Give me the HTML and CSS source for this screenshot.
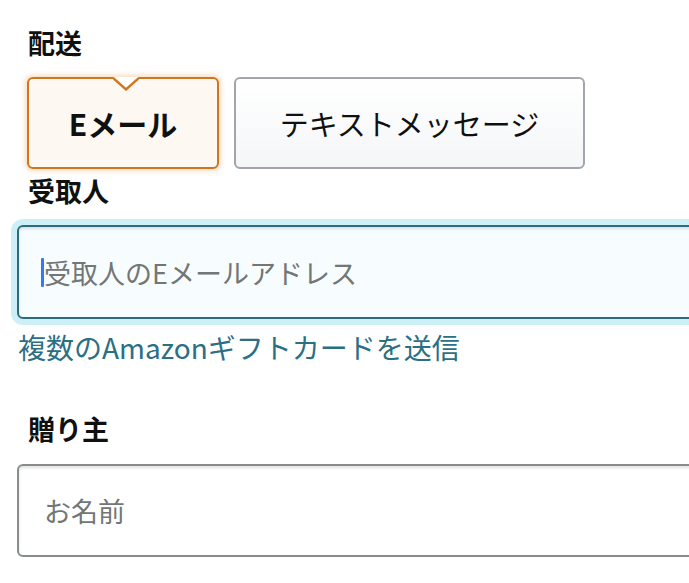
FILE: index.html
```html
<!DOCTYPE html>
<html lang="ja">
<head>
<meta charset="utf-8">
<link rel="stylesheet" href="styles.css">
</head>
<body>
<div class="page">
  <div class="label label-first">配送</div>
  <div class="choices">
    <div class="choice choice-active">
      <span class="notch"><svg width="26" height="14" viewBox="0 0 26 14"><polygon points="0,0 26,0 13,12.5" fill="#ffffff"/><polyline points="0,1 13,12.5 26,1" fill="none" stroke="#d0761f" stroke-width="2.4"/></svg></span>
      Eメール
    </div>
    <div class="choice choice-plain">テキストメッセージ</div>
  </div>
  <div class="label label-recipient">受取人</div>
  <div class="field field-focus">
    <span class="caret"></span><span class="placeholder">受取人のEメールアドレス</span>
  </div>
  <a class="link" href="#">複数のAmazonギフトカードを送信</a>
  <div class="label label-sender">贈り主</div>
  <div class="field field-plain">
    <span class="placeholder">お名前</span>
  </div>
</div>
</body>
</html>
```
FILE: styles.css
```css
html, body {
  margin: 0;
  padding: 0;
  background: #ffffff;
  overflow: hidden;
}
body {
  font-family: "Noto Sans CJK JP", "Noto Sans", sans-serif;
  color: #0f1111;
  width: 689px;
  height: 583px;
}
.page {
  padding: 24px 0 0 17px;
}
.label {
  font-size: 27px;
  font-weight: 700;
  line-height: 38px;
  padding-left: 11px;
}
.choices {
  display: flex;
  gap: 15px;
  margin: 15px 0 0 10px;
}
.choice {
  position: relative;
  box-sizing: border-box;
  height: 92px;
  border-radius: 6px;
  display: flex;
  align-items: center;
  justify-content: center;
  font-size: 29px;
}
.choice-active {
  width: 192px;
  border: 2px solid #d0761f;
  background: #fdf8f2;
  font-weight: 700;
  font-size: 30px;
  box-shadow: 0 0 5px 2px rgba(228, 121, 17, 0.25);
}
.choice-plain {
  width: 351px;
  border: 2px solid #a2a6ac;
  background: linear-gradient(#ffffff, #f5f6f8);
}
.notch {
  position: absolute;
  top: -2px;
  left: 84px;
  width: 26px;
  height: 14px;
  line-height: 0;
}
.label-recipient {
  margin-top: 3px;
}
.field {
  box-sizing: border-box;
  width: 720px;
  display: flex;
  align-items: center;
  padding-left: 22px;
  border-radius: 6px;
  font-size: 27px;
}
.field-focus {
  margin-top: 15px;
  height: 94px;
  border: 2px solid #2d6c7e;
  background: #f7fdfe;
  box-shadow: 0 0 0 6px #cdf0f7, inset 0 2px 3px rgba(15, 17, 17, 0.12);
}
.field-plain {
  margin-top: 16px;
  height: 93px;
  border: 2px solid #888c8c;
  background: #ffffff;
  box-shadow: inset 0 2px 3px rgba(15, 17, 17, 0.12);
}
.field-plain .placeholder {
  padding-left: 3px;
}
.placeholder {
  color: #737676;
}
.caret {
  display: inline-block;
  width: 3px;
  height: 29px;
  background: #3478f6;
  border-radius: 1px;
}
.link {
  display: block;
  margin-top: 10px;
  padding-left: 1px;
  font-size: 28px;
  line-height: 36px;
  color: #2b6f85;
  text-decoration: none;
}
.label-sender {
  margin-top: 45px;
}
```
